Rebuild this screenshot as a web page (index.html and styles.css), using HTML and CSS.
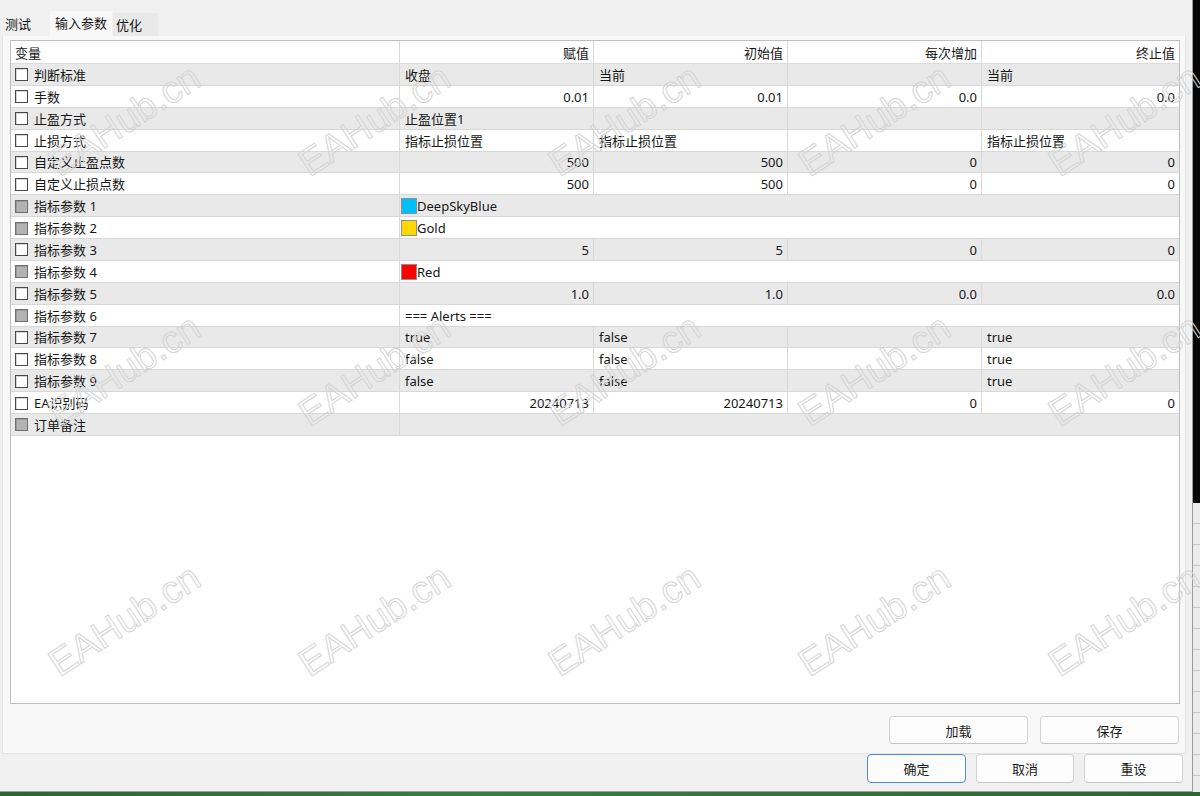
FILE: index.html
```html
<!DOCTYPE html>
<html lang="zh-CN">
<head>
<meta charset="utf-8">
<title>输入参数</title>
<link rel="stylesheet" href="styles.css">
</head>
<body>
<div class="screen">
  <div class="dialog">
    <div class="tabs">
      <div class="tab tab-first">测试</div>
      <div class="tab tab-active">输入参数</div>
      <div class="tab tab-last">优化</div>
    </div>
    <div class="panel">
      <div class="grid">
        <div class="row head">
          <div class="cell">变量</div>
          <div class="cell r">赋值</div>
          <div class="cell r">初始值</div>
          <div class="cell r">每次增加</div>
          <div class="cell r">终止值</div>
        </div>
        <div class="row alt">
          <div class="cell name"><span class="cb"></span>判断标准</div>
          <div class="cell">收盘</div>
          <div class="cell">当前</div>
          <div class="cell"></div>
          <div class="cell">当前</div>
        </div>
        <div class="row">
          <div class="cell name"><span class="cb"></span>手数</div>
          <div class="cell r">0.01</div>
          <div class="cell r">0.01</div>
          <div class="cell r">0.0</div>
          <div class="cell r">0.0</div>
        </div>
        <div class="row alt">
          <div class="cell name"><span class="cb"></span>止盈方式</div>
          <div class="cell">止盈位置1</div>
          <div class="cell"></div>
          <div class="cell"></div>
          <div class="cell"></div>
        </div>
        <div class="row">
          <div class="cell name"><span class="cb"></span>止损方式</div>
          <div class="cell">指标止损位置</div>
          <div class="cell">指标止损位置</div>
          <div class="cell"></div>
          <div class="cell">指标止损位置</div>
        </div>
        <div class="row alt">
          <div class="cell name"><span class="cb"></span>自定义止盈点数</div>
          <div class="cell r">500</div>
          <div class="cell r">500</div>
          <div class="cell r">0</div>
          <div class="cell r">0</div>
        </div>
        <div class="row">
          <div class="cell name"><span class="cb"></span>自定义止损点数</div>
          <div class="cell r">500</div>
          <div class="cell r">500</div>
          <div class="cell r">0</div>
          <div class="cell r">0</div>
        </div>
        <div class="row alt">
          <div class="cell name"><span class="cb off"></span>指标参数 1</div>
          <div class="cell wide color"><span class="swatch sky"></span>DeepSkyBlue</div>
        </div>
        <div class="row">
          <div class="cell name"><span class="cb off"></span>指标参数 2</div>
          <div class="cell wide color"><span class="swatch gold"></span>Gold</div>
        </div>
        <div class="row alt">
          <div class="cell name"><span class="cb"></span>指标参数 3</div>
          <div class="cell r">5</div>
          <div class="cell r">5</div>
          <div class="cell r">0</div>
          <div class="cell r">0</div>
        </div>
        <div class="row">
          <div class="cell name"><span class="cb off"></span>指标参数 4</div>
          <div class="cell wide color"><span class="swatch red"></span>Red</div>
        </div>
        <div class="row alt">
          <div class="cell name"><span class="cb"></span>指标参数 5</div>
          <div class="cell r">1.0</div>
          <div class="cell r">1.0</div>
          <div class="cell r">0.0</div>
          <div class="cell r">0.0</div>
        </div>
        <div class="row">
          <div class="cell name"><span class="cb off"></span>指标参数 6</div>
          <div class="cell wide">=== Alerts ===</div>
        </div>
        <div class="row alt">
          <div class="cell name"><span class="cb"></span>指标参数 7</div>
          <div class="cell">true</div>
          <div class="cell">false</div>
          <div class="cell"></div>
          <div class="cell">true</div>
        </div>
        <div class="row">
          <div class="cell name"><span class="cb"></span>指标参数 8</div>
          <div class="cell">false</div>
          <div class="cell">false</div>
          <div class="cell"></div>
          <div class="cell">true</div>
        </div>
        <div class="row alt">
          <div class="cell name"><span class="cb"></span>指标参数 9</div>
          <div class="cell">false</div>
          <div class="cell">false</div>
          <div class="cell"></div>
          <div class="cell">true</div>
        </div>
        <div class="row">
          <div class="cell name"><span class="cb"></span>EA识别码</div>
          <div class="cell r">20240713</div>
          <div class="cell r">20240713</div>
          <div class="cell r">0</div>
          <div class="cell r">0</div>
        </div>
        <div class="row alt">
          <div class="cell name"><span class="cb off"></span>订单备注</div>
          <div class="cell wide"></div>
        </div>
      </div>
      <div class="file-actions">
        <button class="btn btn-file">加载</button>
        <button class="btn btn-file">保存</button>
      </div>
    </div>
    <div class="actions">
      <button class="btn btn-main focused">确定</button>
      <button class="btn btn-cancel">取消</button>
      <button class="btn btn-main">重设</button>
    </div>
  </div>
  <div class="backdrop">
    <div class="backdrop-dark"></div>
    <div class="backdrop-sheet"></div>
  </div>
</div>
<div class="taskbar"></div>

<div class="watermark" aria-hidden="true">
  <div class="wm"><span>EAHub.cn</span></div>
  <div class="wm"><span>EAHub.cn</span></div>
  <div class="wm"><span>EAHub.cn</span></div>
  <div class="wm"><span>EAHub.cn</span></div>
  <div class="wm"><span>EAHub.cn</span></div>
  <div class="wm"><span>EAHub.cn</span></div>
  <div class="wm"><span>EAHub.cn</span></div>
  <div class="wm"><span>EAHub.cn</span></div>
  <div class="wm"><span>EAHub.cn</span></div>
  <div class="wm"><span>EAHub.cn</span></div>
  <div class="wm"><span>EAHub.cn</span></div>
  <div class="wm"><span>EAHub.cn</span></div>
  <div class="wm"><span>EAHub.cn</span></div>
  <div class="wm"><span>EAHub.cn</span></div>
  <div class="wm"><span>EAHub.cn</span></div>
</div>
</body>
</html>
```
FILE: styles.css
```css
* {
  box-sizing: border-box;
}

body {
  margin: 0;
  width: 1200px;
  height: 796px;
  overflow: hidden;
  position: relative;
  font-family: "Noto Sans", "Noto Sans CJK SC", sans-serif;
  font-size: 13px;
  color: #161616;
  background: #2d6a34;
}

/* window + what shows beside it */
.screen {
  display: flex;
  height: 792px;
}

.dialog {
  width: 1193px;
  height: 792px;
  display: flex;
  flex-direction: column;
  background: #f0f0f0;
  border-right: 1px solid #9c9c9c;
  border-bottom: 1px solid #9c9c9c;
}

.backdrop {
  flex: 1;
  display: flex;
  flex-direction: column;
}

.backdrop-dark {
  height: 503px;
  background: #050505;
}

.backdrop-sheet {
  flex: 1;
  background: repeating-linear-gradient(#ececec 0 20px, #c8c8c8 20px 21px);
}

.taskbar {
  height: 4px;
  background: linear-gradient(90deg, #2a6631, #3b7d41 40%, #2a6631);
}

/* tab strip */
.tabs {
  height: 36px;
  display: flex;
  align-items: flex-end;
}

.tab {
  display: flex;
  align-items: center;
  height: 24px;
  line-height: 18px;
  white-space: nowrap;
}

.tab-first {
  width: 50px;
  padding-left: 5px;
}

.tab-active {
  width: 62px;
  height: 25px;
  padding-left: 5px;
  padding-bottom: 1px;
  background: #f8f8f8;
}

.tab-last {
  width: 45px;
  height: 23px;
  margin-left: 1px;
  padding-left: 3px;
  background: #e9e9e9;
}

/* tab page */
.panel {
  margin-left: 2px;
  width: 1184px;
  height: 718px;
  display: flex;
  flex-direction: column;
  gap: 12px;
  padding: 4px 5px 8px 7px;
  background: #f8f8f8;
  border: 1px solid #e4e4e4;
  border-top: none;
}

.grid {
  height: 664px;
  background: #fff;
  border: 1px solid #bdbdc2;
}

.row {
  display: grid;
  grid-template-columns: 389px 194px 194px 194px 1fr;
  height: 21.875px;
  border-bottom: 1px solid #d8d8d8;
}

.row.alt {
  background: #e9e9e9;
}

.row.head {
  height: 23px;
  background: #fff;
  border-bottom-color: #dcdcdc;
}

.cell {
  display: flex;
  align-items: center;
  padding: 1px 4px 0 5px;
  border-right: 1px solid #d9d9d9;
  white-space: nowrap;
  overflow: hidden;
  line-height: 18px;
}

.cell:last-child {
  border-right: none;
}

.head .cell:first-child {
  padding-left: 4px;
}

.cell.r {
  justify-content: flex-end;
}

.cell.wide {
  grid-column: span 4;
}

.cell.color {
  padding-left: 1px;
}

.cell.name {
  padding-left: 4px;
  gap: 6px;
}

/* checkboxes */
.cb {
  flex: none;
  width: 13px;
  height: 13px;
  background: #fff;
  border: 1px solid #4a4a4a;
  box-shadow: inset 1px 1px 0 #d6d6d6;
}

.cb.off {
  background: #b3b3b3;
  border-color: #6e6e6e;
  box-shadow: inset 1px 1px 0 #9a9a9a;
}

/* colour value swatches */
.swatch {
  flex: none;
  width: 16px;
  height: 16px;
  border: 1px solid #8f8f8f;
}

.sky {
  background: #00bfff;
}

.gold {
  background: #ffd700;
}

.red {
  background: #ff0000;
}

/* buttons */
.btn {
  height: 28px;
  font: inherit;
  color: #1c1c1c;
  background: #fdfdfd;
  border: 1px solid #d3d3d3;
  border-bottom-color: #c4c4c4;
  border-radius: 4px;
  padding: 0;
}

.file-actions {
  display: flex;
  justify-content: flex-end;
  gap: 12px;
  padding-right: 1px;
}

.btn-file {
  width: 139px;
}

.actions {
  height: 37px;
  display: flex;
  justify-content: flex-end;
  align-items: flex-start;
  gap: 10px;
  padding-right: 9px;
}

.btn-main {
  width: 99px;
  height: 29px;
}

.btn-cancel {
  width: 98px;
  height: 29px;
}

.btn.focused {
  border: 1px solid #4a8fd6;
}

/* site watermark, drawn over the window */
.watermark {
  position: absolute;
  left: 0;
  top: -5px;
  display: grid;
  grid-template-columns: repeat(5, 250px);
  grid-auto-rows: 250px;
  pointer-events: none;
}

.wm {
  display: flex;
  align-items: center;
  justify-content: center;
}

.wm span {
  transform: rotate(-33deg);
  font-family: "Liberation Sans", sans-serif;
  font-size: 38px;
  color: transparent;
  -webkit-text-stroke: 1px #d4d4d4;
  white-space: nowrap;
}
```
